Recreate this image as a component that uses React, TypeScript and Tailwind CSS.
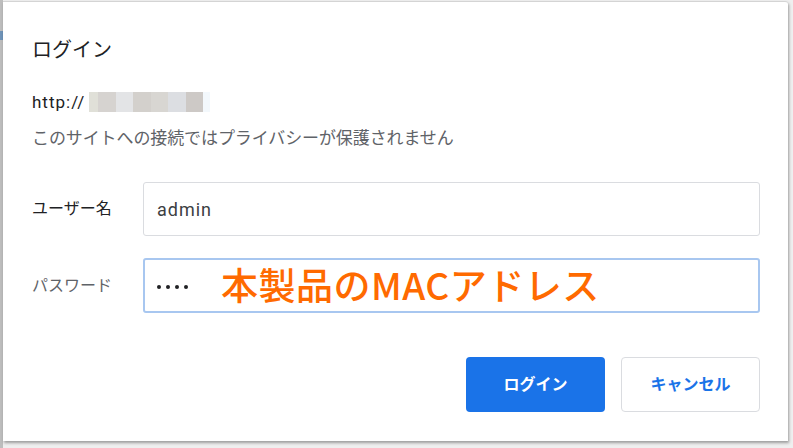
import React from 'react'

const urlBlocks = ['#e0e0d8', '#d6d3d0', '#e3e4e6', '#d3d0cc', '#d8d6d2', '#dcdee2', '#cdc9c6']

export default function App() {
	return (
		<div
			className="flex w-[793px] h-[448px] overflow-hidden bg-[#efefef]"
			style={{ fontFamily: 'Roboto, "Noto Sans CJK JP", sans-serif' }}
		>
			{/* Browser window edge behind the dialog */}
			<div className="flex flex-col w-[3px] h-full bg-[#bdbdbd]">
				<div className="h-[31px]" />
				<div className="h-[9px] bg-[#6f93b8]" />
			</div>

			{/* Dialog */}
			<div className="flex flex-col w-[785px] h-[440px] mt-[1px] bg-white border-t border-[#d4d4d4] rounded-tr-[3px] shadow-[1px_2px_3px_rgba(0,0,0,0.35)] pl-[29px] pr-[28px] pt-[34px]">
				<h1 className="text-[20px] leading-[28px] text-[#202124]">ログイン</h1>

				<div className="flex items-center mt-[28px] h-[20px]">
					<span className="text-[17px] leading-[20px] tracking-[1px] text-[#202124]">http://</span>
					<div className="flex h-[20px] ml-[4px]">
						{urlBlocks.map((c, i) => (
							<div
								key={i}
								className={i === 0 ? 'w-[9px] h-full' : 'w-[17.5px] h-full'}
								style={{ backgroundColor: c }}
							/>
						))}
						<div className="w-[7px] h-full bg-[#f3f8fc]" />
					</div>
				</div>

				<p className="mt-[15px] text-[17px] leading-[22px] text-[#5f6368] tracking-[-0.1px]">
					このサイトへの接続ではプライバシーが保護されません
				</p>

				{/* Username */}
				<div className="flex items-center mt-[33px]">
					<label className="w-[111px] text-[16px] text-[#202124]">ユーザー名</label>
					<div className="flex items-center w-[617px] h-[54px] border border-[#dadce0] rounded-[3px] px-[13px]">
						<span className="text-[18px] tracking-[1px] text-[#3c4043]">admin</span>
					</div>
				</div>

				{/* Password */}
				<div className="flex items-center mt-[22px]">
					<label className="w-[111px] text-[16px] text-[#5f6368]">パスワード</label>
					<div className="flex items-center w-[617px] h-[55px] border-2 border-[#a8c7f0] rounded-[3px] px-[12px]">
						<div className="flex gap-[5px] mt-[2px]">
							<span className="w-[4px] h-[4px] rounded-full bg-[#202124]" />
							<span className="w-[4px] h-[4px] rounded-full bg-[#202124]" />
							<span className="w-[4px] h-[4px] rounded-full bg-[#202124]" />
							<span className="w-[4px] h-[4px] rounded-full bg-[#202124]" />
						</div>
						<span
							className="ml-[33px] text-[37px] leading-[40px] tracking-[0.5px] font-medium text-[#ff6a00] -mt-[4px]"
							style={{ fontFamily: '"Noto Sans CJK JP", sans-serif' }}
						>
							本製品のMACアドレス
						</span>
					</div>
				</div>

				{/* Buttons */}
				<div className="flex justify-end gap-[16px] mt-[44px]">
					<button className="w-[139px] h-[55px] rounded-[4px] bg-[#1a73e8] text-white text-[16px] font-bold">
						ログイン
					</button>
					<button className="w-[139px] h-[55px] rounded-[4px] bg-white border border-[#dadce0] text-[#1a73e8] text-[16px] font-bold">
						キャンセル
					</button>
				</div>
			</div>
		</div>
	)
}
